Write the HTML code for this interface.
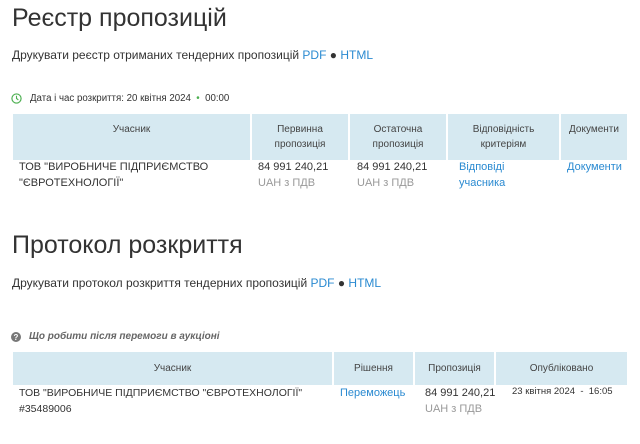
<!DOCTYPE html><html><head><meta charset="utf-8"><style>
body{margin:0;width:640px;height:444px;background:#fff;font-family:"Liberation Sans",sans-serif;color:#333;position:relative;overflow:hidden}
.a{position:absolute;white-space:nowrap}
h1{position:absolute;margin:0;font-weight:normal;font-size:25px;color:#333;left:12px}
.p{font-size:12px;left:12px}
a{color:#2a8ad1;text-decoration:none}
.th{position:absolute;background:#d6e9f1;font-size:10px;color:#444;text-align:center;display:flex;align-items:center;justify-content:center;line-height:15px}
.c{font-size:11px;line-height:16px}
.g{color:#999}
</style></head><body>
<h1 style="top:4px">Реєстр пропозицій</h1>
<div class="a p" style="top:48px">Друкувати реєстр отриманих тендерних пропозицій <a>PDF</a> ● <a>HTML</a></div>
<svg class="a" style="left:11px;top:93px" width="11" height="11" viewBox="0 0 12 12"><circle cx="6" cy="6" r="5" fill="none" stroke="#4caf50" stroke-width="1.3"/><path d="M6 3v3l2 1.5" fill="none" stroke="#4caf50" stroke-width="1.2"/></svg>
<div class="a" style="left:30px;top:93px;font-size:9.7px;color:#333">Дата і час розкриття: 20 квітня 2024 &nbsp;<span style="color:#4caf50">•</span>&nbsp; 00:00</div>
<div class="th" style="left:13px;top:114px;width:237px;height:46px;align-items:flex-start;padding-top:8px;box-sizing:border-box">Учасник</div>
<div class="th" style="left:252px;top:114px;width:96px;height:46px">Первинна<br>пропозиція</div>
<div class="th" style="left:350px;top:114px;width:96px;height:46px">Остаточна<br>пропозиція</div>
<div class="th" style="left:448px;top:114px;width:111px;height:46px">Відповідність<br>критеріям</div>
<div class="th" style="left:561px;top:114px;width:66px;height:46px;align-items:flex-start;padding-top:8px;box-sizing:border-box">Документи</div>
<div class="a c" style="left:19px;top:159px">ТОВ "ВИРОБНИЧЕ ПІДПРИЄМСТВО<br>"ЄВРОТЕХНОЛОГІЇ"</div>
<div class="a c" style="left:258px;top:159px">84 991 240,21<br><span class="g">UAH з ПДВ</span></div>
<div class="a c" style="left:357px;top:159px">84 991 240,21<br><span class="g">UAH з ПДВ</span></div>
<div class="a c" style="left:459px;top:159px"><a>Відповіді<br>учасника</a></div>
<div class="a c" style="left:567px;top:159px"><a>Документи</a></div>
<h1 style="top:231px">Протокол розкриття</h1>
<div class="a p" style="top:276px">Друкувати протокол розкриття тендерних пропозицій <a>PDF</a> ● <a>HTML</a></div>
<svg class="a" style="left:11px;top:332px" width="10" height="10" viewBox="0 0 10 10"><circle cx="5" cy="5" r="5" fill="#777"/><text x="5" y="8" font-size="8" fill="#fff" text-anchor="middle" font-family="Liberation Sans" font-weight="bold">?</text></svg>
<div class="a" style="left:29px;top:331px;font-size:10px;color:#666;font-style:italic;font-weight:bold">Що робити після перемоги в аукціоні</div>
<div class="th" style="left:13px;top:352px;width:319px;height:33px">Учасник</div>
<div class="th" style="left:334px;top:352px;width:79px;height:33px">Рішення</div>
<div class="th" style="left:415px;top:352px;width:79px;height:33px">Пропозиція</div>
<div class="th" style="left:496px;top:352px;width:131px;height:33px">Опубліковано</div>
<div class="a c" style="left:19px;top:385px;font-size:10.5px">ТОВ "ВИРОБНИЧЕ ПІДПРИЄМСТВО "ЄВРОТЕХНОЛОГІЇ"<br>#35489006</div>
<div class="a c" style="left:340px;top:385px"><a>Переможець</a></div>
<div class="a c" style="left:425px;top:385px">84 991 240,21<br><span class="g">UAH з ПДВ</span></div>
<div class="a" style="left:512px;top:386px;font-size:9.5px">23 квітня 2024 &nbsp;-&nbsp; 16:05</div>
</body></html>
